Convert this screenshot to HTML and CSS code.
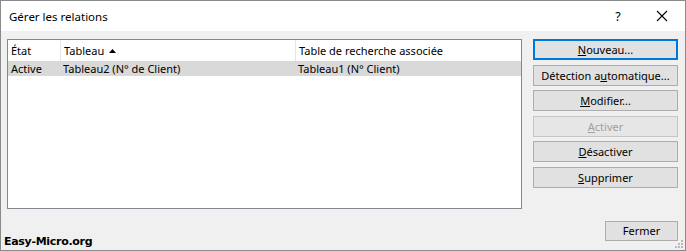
FILE: index.html
```html
<!DOCTYPE html>
<html lang="fr">
<head>
<meta charset="utf-8">
<title>Gérer les relations</title>
<link rel="stylesheet" href="styles.css">
</head>
<body>
<div class="window">
  <div class="titlebar">
    <span class="title">Gérer les relations</span>
    <span class="help">?</span>
    <span class="close">
      <svg width="12" height="12" viewBox="0 0 12 12"><path d="M1 1L11 11M11 1L1 11" stroke="#000" stroke-width="1.1" fill="none"/></svg>
    </span>
  </div>
  <div class="content">
    <div class="main">
      <div class="list">
        <div class="row head">
          <div class="cell c1">État</div>
          <div class="cell c2">Tableau <svg class="sort" width="7" height="4" viewBox="0 0 7 4"><path d="M0 4L3.5 0L7 4Z" fill="#000"/></svg></div>
          <div class="cell c3">Table de recherche associée</div>
        </div>
        <div class="row sel">
          <div class="cell c1">Active</div>
          <div class="cell c2">Tableau2 (N° de Client)</div>
          <div class="cell c3">Tableau1 (N° Client)</div>
        </div>
      </div>
      <div class="buttons">
        <button class="btn default"><u>N</u>ouveau...</button>
        <button class="btn">Détection a<u>u</u>tomatique...</button>
        <button class="btn"><u>M</u>odifier...</button>
        <button class="btn disabled"><u>A</u>ctiver</button>
        <button class="btn"><u>D</u>ésactiver</button>
        <button class="btn"><u>S</u>upprimer</button>
      </div>
    </div>
    <div class="footer">
      <span class="brand">Easy-Micro.org</span>
      <button class="btn close-btn">Fermer</button>
    </div>
    <svg class="grip" width="9" height="9" viewBox="0 0 9 9">
      <rect x="6" y="0" width="2" height="2" fill="#b8b8b8"/>
      <rect x="3" y="3" width="2" height="2" fill="#b8b8b8"/>
      <rect x="6" y="3" width="2" height="2" fill="#b8b8b8"/>
      <rect x="0" y="6" width="2" height="2" fill="#b8b8b8"/>
      <rect x="3" y="6" width="2" height="2" fill="#b8b8b8"/>
      <rect x="6" y="6" width="2" height="2" fill="#b8b8b8"/>
    </svg>
  </div>
</div>
</body>
</html>
```
FILE: styles.css
```css
* { box-sizing: border-box; }
html, body { margin: 0; padding: 0; background: #fff; }
body {
  font-family: "Noto Sans", "Liberation Sans", sans-serif;
  font-size: 11px;
  color: #000;
}
.window {
  width: 686px;
  height: 251px;
  border: 1px solid #8a8a8a;
  display: flex;
  flex-direction: column;
  background: #f0f0f0;
}
.titlebar {
  height: 30px;
  background: #fff;
  display: flex;
  align-items: center;
  padding-left: 8px;
}
.title { flex: 1; font-size: 11.5px; }
.help { width: 16px; text-align: center; margin-right: 30px; font-size: 12.5px; }
.close { width: 12px; height: 12px; display: flex; margin-right: 17px; }
.content {
  flex: 1;
  position: relative;
  padding: 8px 7px 8px 6px;
  display: flex;
  flex-direction: column;
}
.main {
  display: flex;
  gap: 11px;
  height: 170px;
}
.list {
  width: 515px;
  height: 170px;
  background: #fff;
  border: 1px solid #828790;
}
.row { display: flex; height: 15px; align-items: center; }
.row.head { height: 21px; }
.row.sel { background: #d9d9d9; }
.cell { white-space: nowrap; padding-left: 3px; }
.c1 { width: 52px; }
.c2 { width: 235px; display: flex; align-items: center; gap: 4px; }
.row.head .c2, .row.head .c3 { border-left: 1px solid #e5e5e5; height: 21px; display: flex; align-items: center; }
.row.head .c2 { padding-left: 3px; }
.c3 { flex: 1; }
.sort { margin-left: 1px; }
.buttons {
  width: 145px;
  display: flex;
  flex-direction: column;
  gap: 4.6px;
}
.btn {
  font-family: inherit;
  font-size: 11px;
  color: #000;
  background: #e1e1e1;
  border: 1px solid #adadad;
  height: 21px;
  padding: 0;
  margin: 0;
  line-height: 19px;
}
.btn.default { border: 2px solid #0078d7; line-height: 17px; }
.btn.disabled { background: #e6e6e6; border-color: #c5c5c5; color: #a0a0a0; }
.footer {
  margin-top: auto;
  display: flex;
  justify-content: space-between;
  align-items: flex-end;
}
.brand {
  font-family: "DejaVu Sans", Verdana, sans-serif;
  font-weight: bold;
  font-size: 11px;
  letter-spacing: -0.3px;
  margin-left: -3px;
  margin-bottom: -6px;
}
.close-btn { width: 73px; height: 20px; margin-bottom: 1px; line-height: 18px; }
.grip { position: absolute; right: 1px; bottom: 1px; }
```
